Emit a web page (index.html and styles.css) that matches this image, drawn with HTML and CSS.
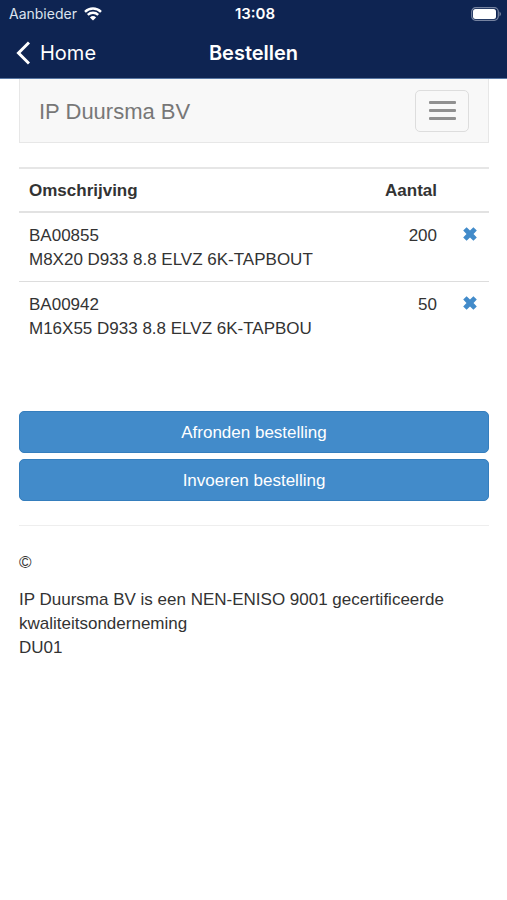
FILE: index.html
```html
<!DOCTYPE html>
<html lang="nl">
<head>
<meta charset="utf-8">
<meta name="viewport" content="width=device-width, initial-scale=1">
<title>Bestellen</title>
<link rel="stylesheet" href="styles.css">
</head>
<body>
<header class="app-header">
  <div class="status-bar">
    <div class="carrier">
      <span>Aanbieder</span>
      <svg class="wifi" viewBox="0 0 18 14" aria-hidden="true">
        <path d="M1 4.8a11.5 11.5 0 0 1 16 0M3.8 7.9a7.4 7.4 0 0 1 10.4 0"/>
        <path class="wifi-dot" d="M9 13.6 5.9 10.4a4.5 4.5 0 0 1 6.2 0z"/>
      </svg>
    </div>
    <time class="clock">13:08</time>
    <svg class="battery" viewBox="0 0 30 14" aria-hidden="true">
      <rect class="battery-case" x="0.7" y="0.7" width="26.6" height="12.6" rx="4"/>
      <rect class="battery-level" x="2" y="2" width="23" height="10" rx="2.5"/>
      <path class="battery-tip" d="M28.5 4.5q3 2.5 0 5z"/>
    </svg>
  </div>
  <div class="title-bar">
    <a class="back" href="#">
      <svg class="chevron" viewBox="0 0 14 24" aria-hidden="true"><path d="M13 1.5 2.5 12 13 22.5"/></svg>
      <span>Home</span>
    </a>
    <h1 class="title">Bestellen</h1>
  </div>
</header>
<div class="container">
  <nav class="navbar">
    <a class="brand" href="#">IP Duursma BV</a>
    <button class="toggle" type="button" aria-label="Menu">
      <span class="bar"></span><span class="bar"></span><span class="bar"></span>
    </button>
  </nav>
  <main>
    <table class="orders">
      <thead>
        <tr><th>Omschrijving</th><th class="amount">Aantal</th><th class="action"></th></tr>
      </thead>
      <tbody>
        <tr>
          <td>BA00855<br>M8X20 D933 8.8 ELVZ 6K-TAPBOUT</td>
          <td class="amount">200</td>
          <td class="action"><a class="remove" href="#" aria-label="Verwijderen"><svg viewBox="0 0 14 14" aria-hidden="true"><path d="M3.6.2 7 3.5 10.4.2 13.8 3.6 10.5 7l3.3 3.4-3.4 3.4L7 10.5l-3.4 3.3L.2 10.4 3.5 7 .2 3.6z"/></svg></a></td>
        </tr>
        <tr>
          <td>BA00942<br>M16X55 D933 8.8 ELVZ 6K-TAPBOU</td>
          <td class="amount">50</td>
          <td class="action"><a class="remove" href="#" aria-label="Verwijderen"><svg viewBox="0 0 14 14" aria-hidden="true"><path d="M3.6.2 7 3.5 10.4.2 13.8 3.6 10.5 7l3.3 3.4-3.4 3.4L7 10.5l-3.4 3.3L.2 10.4 3.5 7 .2 3.6z"/></svg></a></td>
        </tr>
      </tbody>
    </table>
    <div class="buttons">
      <button class="btn" type="button">Afronden bestelling</button>
      <button class="btn" type="button">Invoeren bestelling</button>
    </div>
  </main>
  <footer class="footer">
    <p>©</p>
    <p>IP Duursma BV is een NEN-ENISO 9001 gecertificeerde kwaliteitsonderneming<br>DU01</p>
  </footer>
</div>
</body>
</html>
```
FILE: styles.css
```css
* {
  box-sizing: border-box;
}

body {
  margin: 0;
  background: #fff;
  color: #333;
  font: 17px/24px "Liberation Sans", Arial, sans-serif;
}

a {
  color: inherit;
  text-decoration: none;
}

.app-header {
  background: #0e2452;
  border-bottom: 1px solid #5877a3;
  color: #fff;
  font-family: Inter, sans-serif;
}

.status-bar,
.title-bar {
  display: grid;
  grid-template-columns: 1fr auto 1fr;
  align-items: center;
}

.status-bar {
  height: 27px;
  padding: 0 6px 0 9px;
  font-size: 14px;
}

.carrier {
  display: flex;
  align-items: center;
  gap: 7px;
  color: #dce3ee;
}

.wifi {
  width: 18px;
  height: 14px;
  fill: none;
  stroke: #fff;
  stroke-width: 2.4;
}

.wifi-dot {
  fill: #fff;
  stroke: none;
}

.clock {
  font-size: 15px;
  font-weight: 600;
}

.battery {
  width: 30px;
  height: 14px;
  justify-self: end;
}

.battery-case {
  fill: none;
  stroke: #7683a0;
  stroke-width: 1.2;
}

.battery-level {
  fill: #fff;
}

.battery-tip {
  fill: #7683a0;
}

.title-bar {
  height: 51px;
  padding: 0 16px;
}

.back {
  display: flex;
  align-items: center;
  gap: 10px;
  font-size: 20px;
}

.chevron {
  width: 14px;
  height: 24px;
  fill: none;
  stroke: #fff;
  stroke-width: 3;
}

.title {
  margin: 0;
  font-size: 20px;
  font-weight: 600;
}

.container {
  padding: 0 18px 0 19px;
}

.navbar {
  display: flex;
  align-items: center;
  justify-content: space-between;
  height: 64px;
  margin-bottom: 24px;
  padding: 0 19px;
  background: #f8f8f8;
  border: 1px solid #e7e7e7;
  border-top: 0;
}

.brand {
  padding-top: 2px;
  color: #777;
  font-size: 22px;
}

.toggle {
  display: flex;
  flex-direction: column;
  align-items: center;
  justify-content: center;
  gap: 5px;
  width: 54px;
  height: 42px;
  padding: 0;
  background: #f8f8f8;
  border: 1px solid #ddd;
  border-radius: 5px;
}

.bar {
  width: 27px;
  height: 3px;
  background: #909090;
  border-radius: 1px;
}

.orders {
  width: 100%;
  margin-bottom: 61px;
  border-collapse: separate;
  border-spacing: 0;
}

.orders th,
.orders td {
  padding: 11px 10px 9px;
  border-top: 1px solid #ddd;
  text-align: left;
  vertical-align: top;
}

.orders th {
  padding: 10px 10px 8px;
  border-top: 2px solid #e6e6e6;
}

.orders tbody tr:first-child td {
  border-top: 2px solid #e2e2e2;
}

.orders .amount {
  text-align: right;
}

.orders .action {
  width: 42px;
  padding-right: 12px;
  text-align: right;
}

.remove {
  display: inline-block;
}

.remove svg {
  display: block;
  width: 14px;
  height: 14px;
  margin-top: 2px;
  fill: #428bca;
}

.buttons {
  display: grid;
  gap: 6px;
}

.btn {
  width: 100%;
  height: 42px;
  padding: 2px 14px 0;
  background: #428bca;
  border: 1px solid #357ebd;
  border-radius: 5px;
  color: #fff;
  font: inherit;
}

.footer {
  margin-top: 24px;
  padding-top: 25px;
  border-top: 1px solid #eee;
}

.footer p {
  margin: 0 0 13px;
}
```
